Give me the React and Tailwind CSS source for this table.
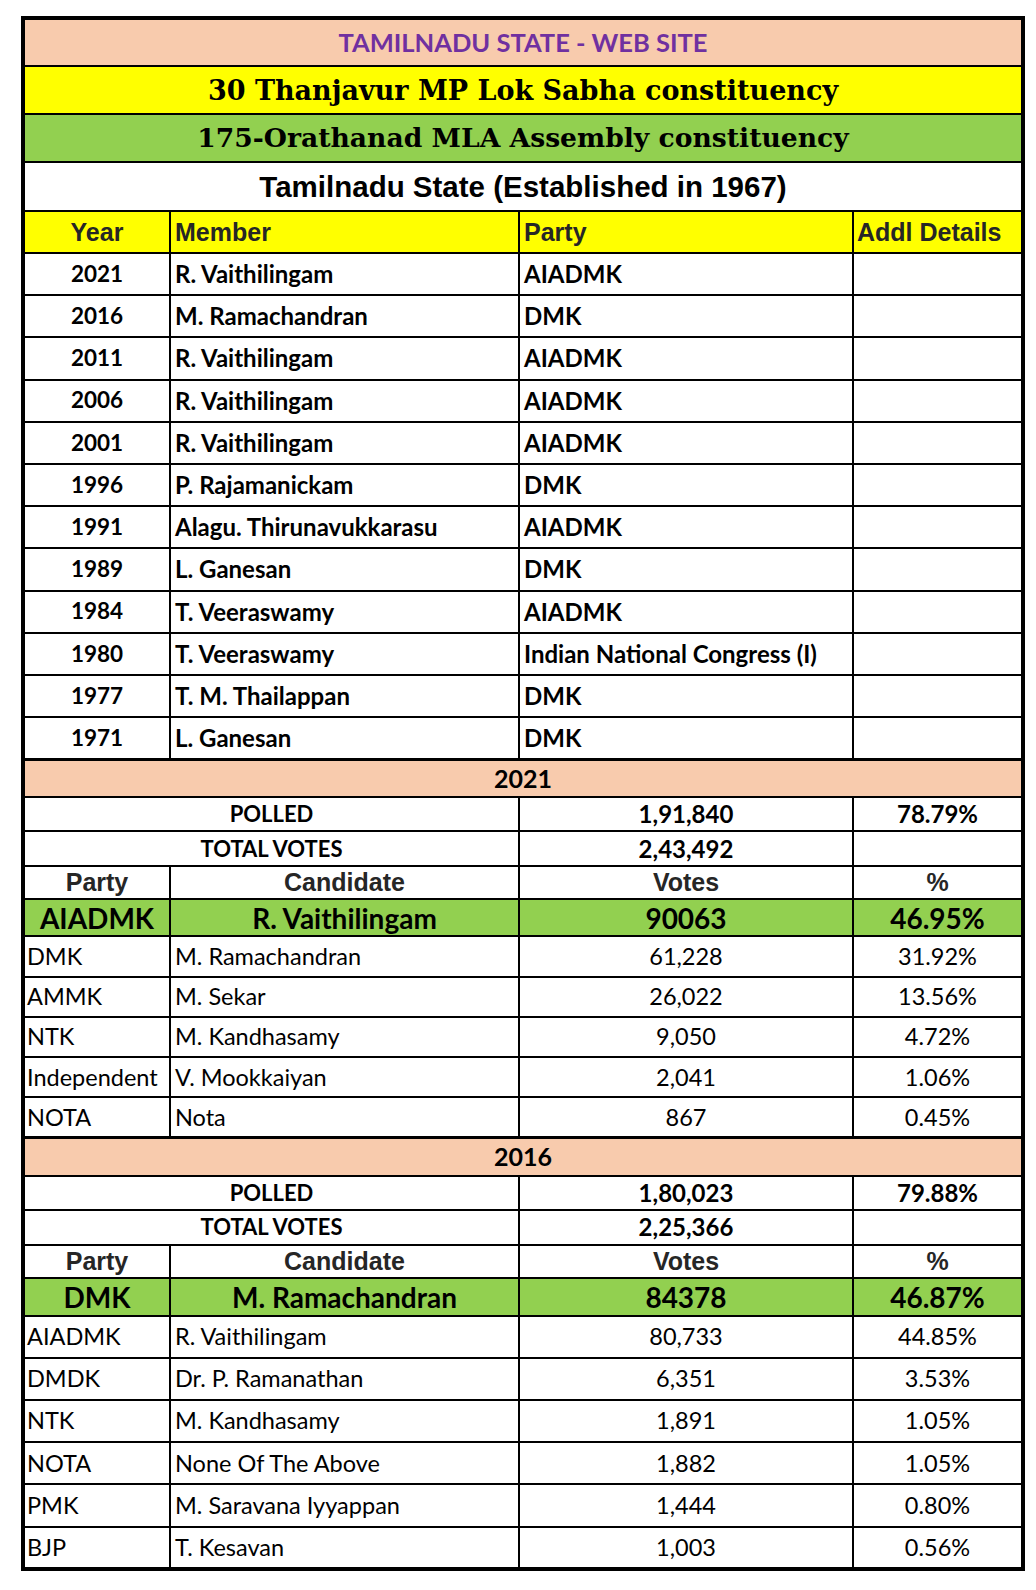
const members = [
  ["2021", "R. Vaithilingam", "AIADMK"],
  ["2016", "M. Ramachandran", "DMK"],
  ["2011", "R. Vaithilingam", "AIADMK"],
  ["2006", "R. Vaithilingam", "AIADMK"],
  ["2001", "R. Vaithilingam", "AIADMK"],
  ["1996", "P. Rajamanickam", "DMK"],
  ["1991", "Alagu. Thirunavukkarasu", "AIADMK"],
  ["1989", "L. Ganesan", "DMK"],
  ["1984", "T. Veeraswamy", "AIADMK"],
  ["1980", "T. Veeraswamy", "Indian National Congress (I)"],
  ["1977", "T. M. Thailappan", "DMK"],
  ["1971", "L. Ganesan", "DMK"],
];

const elections = [
  {
    year: "2021",
    polled: "1,91,840",
    pct: "78.79%",
    total: "2,43,492",
    winner: ["AIADMK", "R. Vaithilingam", "90063", "46.95%"],
    rows: [
      ["DMK", "M. Ramachandran", "61,228", "31.92%"],
      ["AMMK", "M. Sekar", "26,022", "13.56%"],
      ["NTK", "M. Kandhasamy", "9,050", "4.72%"],
      ["Independent", "V. Mookkaiyan", "2,041", "1.06%"],
      ["NOTA", "Nota", "867", "0.45%"],
    ],
    rowH: "h-[40.3px]",
    bandH: "h-[38px]",
    polledH: "h-[34px]",
    totalH: "h-[35px]",
    winH: "h-[37px]",
  },
  {
    year: "2016",
    polled: "1,80,023",
    pct: "79.88%",
    total: "2,25,366",
    winner: ["DMK", "M. Ramachandran", "84378", "46.87%"],
    rows: [
      ["AIADMK", "R. Vaithilingam", "80,733", "44.85%"],
      ["DMDK", "Dr. P. Ramanathan", "6,351", "3.53%"],
      ["NTK", "M. Kandhasamy", "1,891", "1.05%"],
      ["NOTA", "None Of The Above", "1,882", "1.05%"],
      ["PMK", "M. Saravana Iyyappan", "1,444", "0.80%"],
      ["BJP", "T. Kesavan", "1,003", "0.56%"],
    ],
    rowH: "h-[42.2px]",
    bandH: "h-[38px]",
    polledH: "h-[34px]",
    totalH: "h-[35px]",
    winH: "h-[38px]",
  },
];

const cal = "font-['Lato',sans-serif]";
const ari = "font-['Liberation_Sans',Arial,sans-serif]";
const ser = "font-['DejaVu_Serif',serif]";
const cell = "border-2 border-black p-0 leading-none";

function Election({ e }) {
  return (
    <>
      <tr className={`${e.bandH} bg-[#f8cbad]`}>
        <td colSpan={4} className={`${cell} border-t-[3px] text-center font-bold text-[25px] text-black ${cal}`}>
          {e.year}
        </td>
      </tr>
      <tr className={e.polledH}>
        <td colSpan={2} className={`${cell} text-center font-bold text-[22px] ${cal}`}>POLLED</td>
        <td className={`${cell} text-center font-bold text-[24px] ${cal}`}>{e.polled}</td>
        <td className={`${cell} text-center font-bold text-[24px] ${cal}`}>{e.pct}</td>
      </tr>
      <tr className={e.totalH}>
        <td colSpan={2} className={`${cell} text-center font-bold text-[22px] ${cal}`}>TOTAL VOTES</td>
        <td className={`${cell} text-center font-bold text-[24px] ${cal}`}>{e.total}</td>
        <td className={cell}></td>
      </tr>
      <tr className="h-[33px]">
        {["Party", "Candidate", "Votes", "%"].map((h) => (
          <td key={h} className={`${cell} text-center font-bold text-[25px] text-[#262626] ${ari}`}>
            {h}
          </td>
        ))}
      </tr>
      <tr className={`${e.winH} bg-[#92d050]`}>
        {e.winner.map((w, i) => (
          <td key={i} className={`${cell} text-center font-bold text-[28px] ${cal}`}>
            {w}
          </td>
        ))}
      </tr>
      {e.rows.map((r, i) => (
        <tr key={i} className={e.rowH}>
          <td className={`${cell} pl-[2px] text-left text-[23.5px] ${cal}`}>{r[0]}</td>
          <td className={`${cell} pl-[4px] text-left text-[23.5px] ${cal}`}>{r[1]}</td>
          <td className={`${cell} text-center text-[23.5px] ${cal}`}>{r[2]}</td>
          <td className={`${cell} text-center text-[23.5px] ${cal}`}>{r[3]}</td>
        </tr>
      ))}
    </>
  );
}

export default function App() {
  return (
    <div className="w-[1036px] h-[1590px] bg-white pt-[16px] pl-[21px] text-black">
      <table className="table-fixed border-collapse border-4 border-black w-[1000px]">
        <colgroup>
          <col className="w-[147px]" />
          <col className="w-[349px]" />
          <col className="w-[334px]" />
          <col className="w-[170px]" />
        </colgroup>
        <tbody>
          <tr className="h-[48px] bg-[#f8cbad]">
            <td colSpan={4} className={`${cell} text-center font-bold text-[25.5px] text-[#7030a0] ${cal}`}>
              TAMILNADU STATE - WEB SITE
            </td>
          </tr>
          <tr className="h-[48px] bg-[#ffff00]">
            <td colSpan={4} className={`${cell} text-center font-bold text-[27px] ${ser}`}>
              30 Thanjavur MP Lok Sabha constituency
            </td>
          </tr>
          <tr className="h-[48px] bg-[#92d050]">
            <td colSpan={4} className={`${cell} text-center font-bold text-[26.6px] ${ser}`}>
              175-Orathanad MLA Assembly constituency
            </td>
          </tr>
          <tr className="h-[49px] bg-white">
            <td colSpan={4} className={`${cell} text-center font-bold text-[29.5px] ${ari}`}>
              Tamilnadu State (Established in 1967)
            </td>
          </tr>
          <tr className="h-[42px] bg-[#ffff00]">
            <td className={`${cell} text-center font-bold text-[25px] text-[#262626] ${ari}`}>Year</td>
            <td className={`${cell} pl-[4px] text-left font-bold text-[25px] text-[#262626] ${ari}`}>Member</td>
            <td className={`${cell} pl-[4px] text-left font-bold text-[25px] text-[#262626] ${ari}`}>Party</td>
            <td className={`${cell} pl-[3px] text-left font-bold text-[25px] text-[#262626] ${ari}`}>Addl Details</td>
          </tr>
          {members.map((m, i) => (
            <tr key={i} className="h-[42.2px]">
              <td className={`${cell} text-center font-bold text-[22.5px] ${cal}`}>{m[0]}</td>
              <td className={`${cell} pl-[4px] text-left font-bold text-[24px] ${cal}`}>{m[1]}</td>
              <td className={`${cell} pl-[4px] text-left font-bold text-[24px] ${cal}`}>{m[2]}</td>
              <td className={cell}></td>
            </tr>
          ))}
          {elections.map((e) => (
            <Election key={e.year} e={e} />
          ))}
        </tbody>
      </table>
    </div>
  );
}
